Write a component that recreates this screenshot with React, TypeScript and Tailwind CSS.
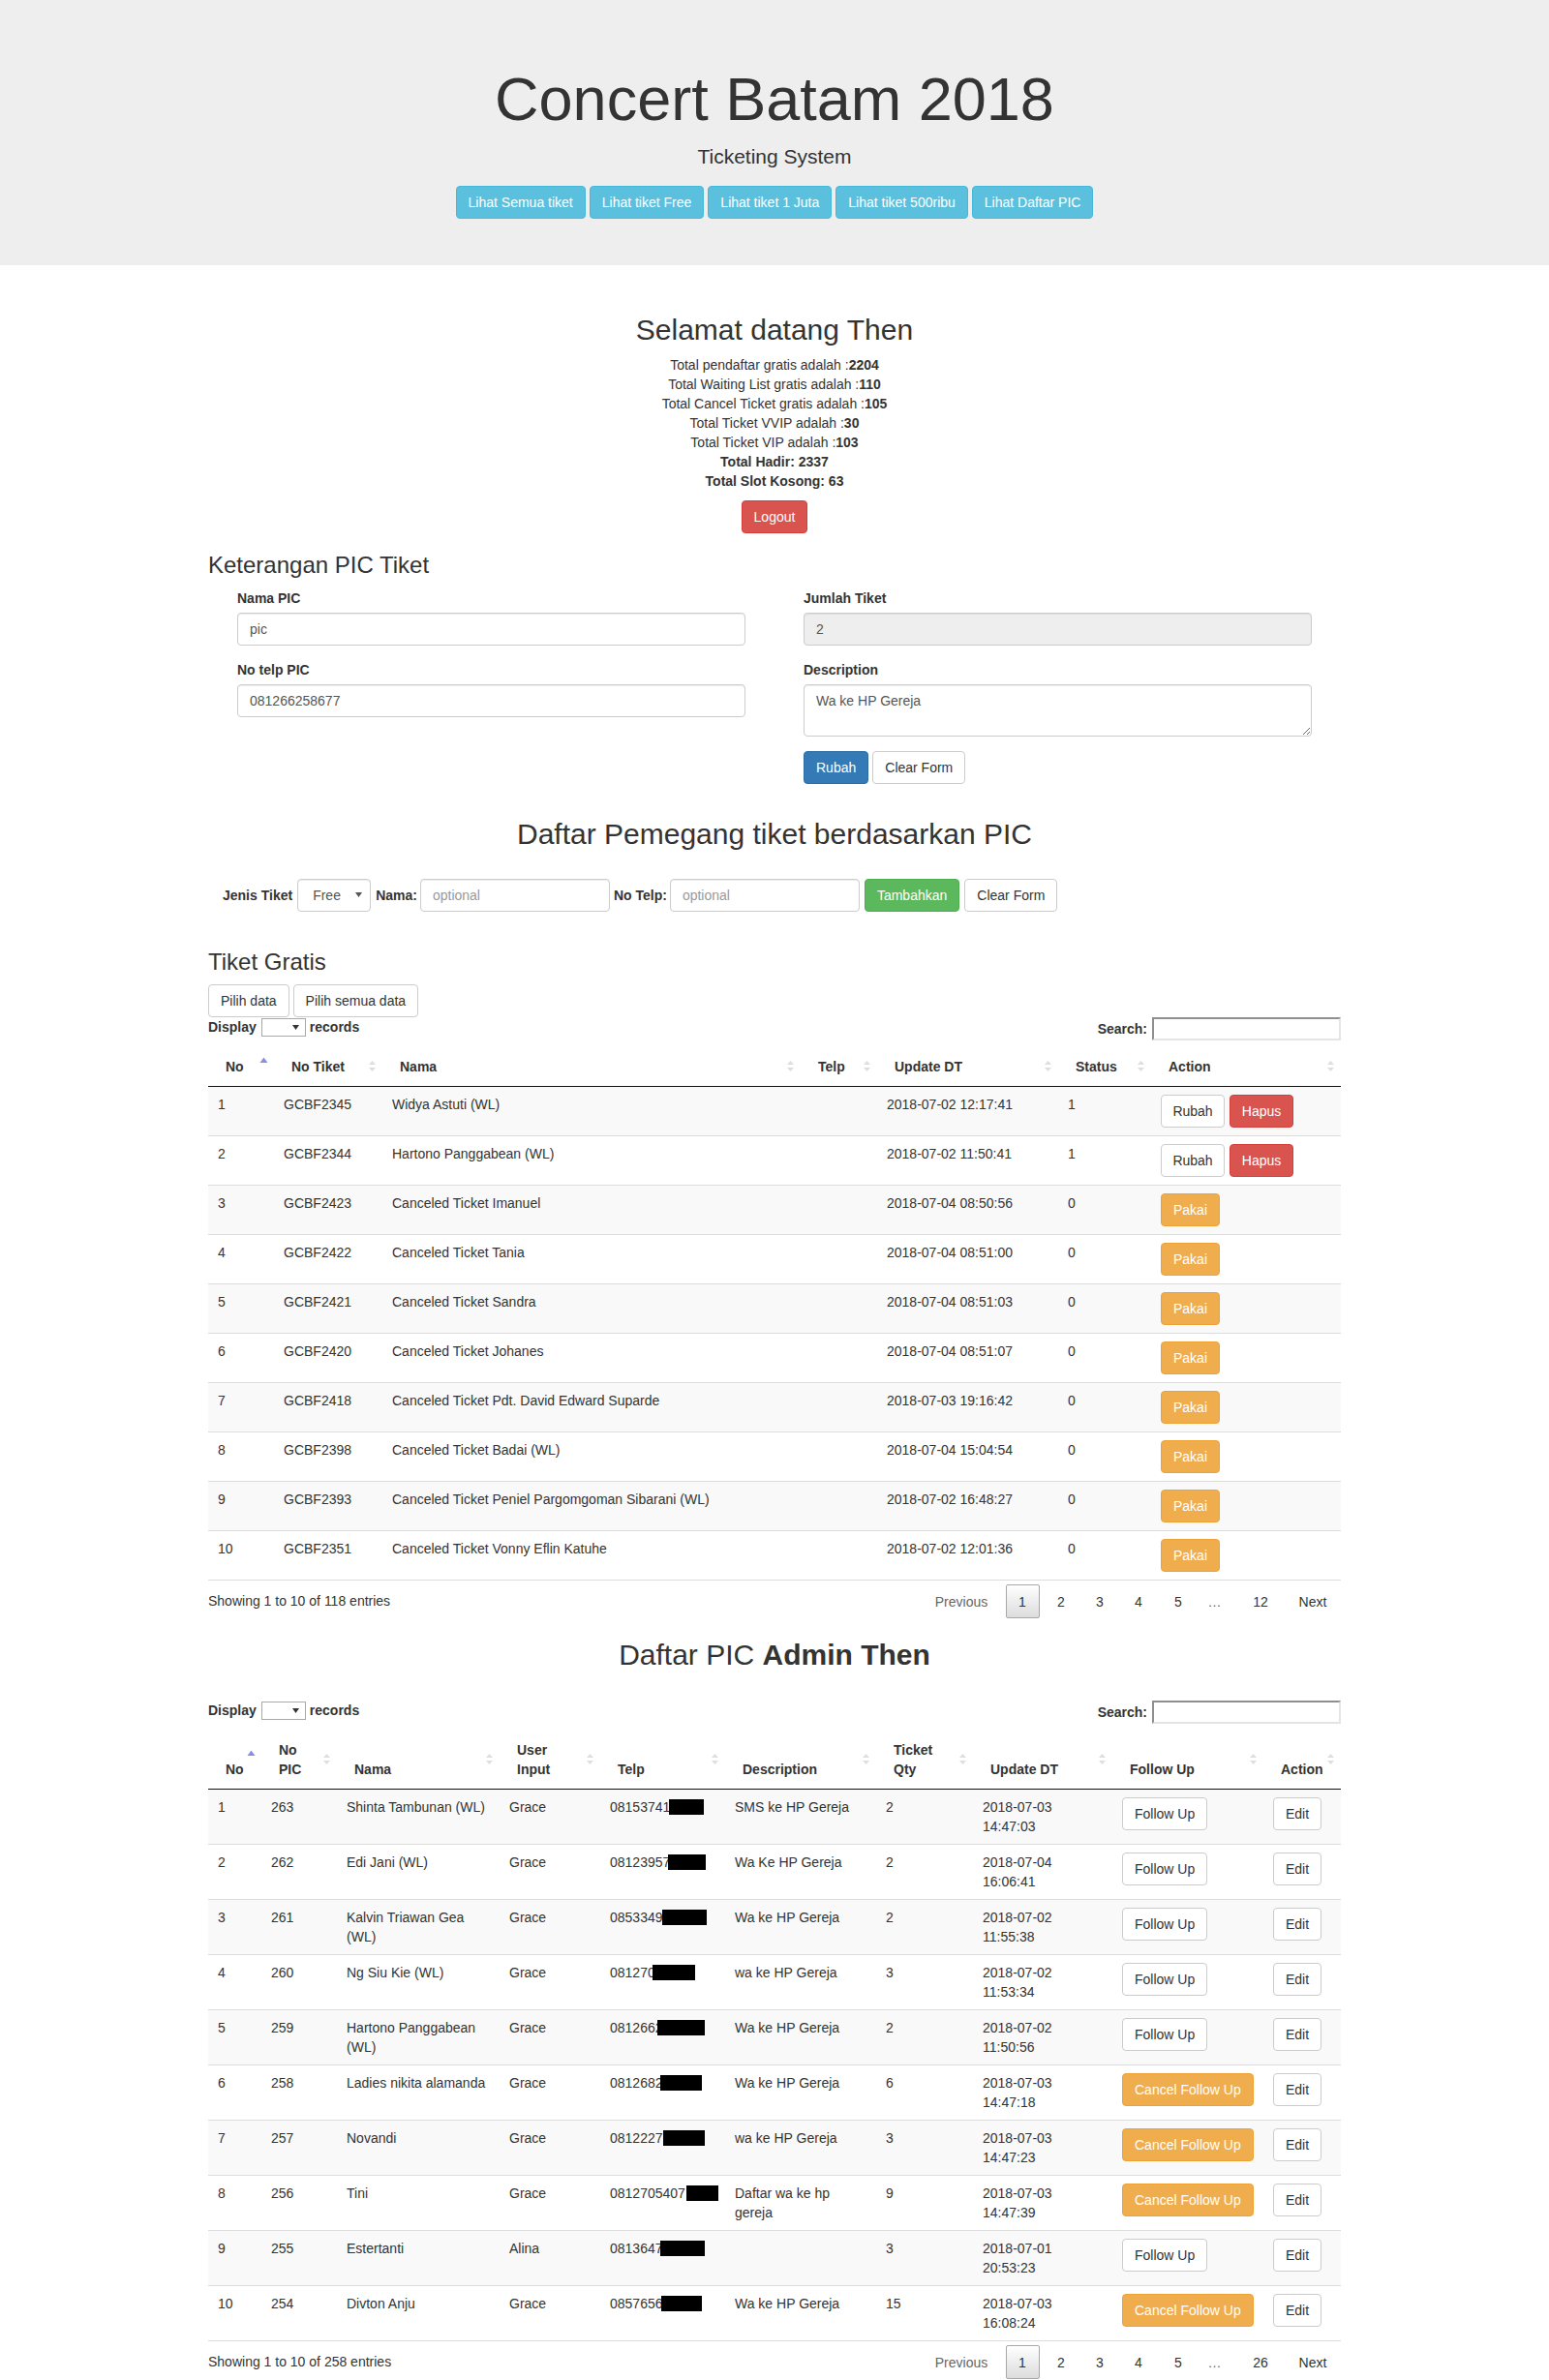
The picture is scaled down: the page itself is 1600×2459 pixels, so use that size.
import React from 'react'

const btn =
  'inline-flex h-[34px] items-center justify-center whitespace-nowrap rounded-[4px] border px-[12px] text-[14px] leading-[20px]'
const btnDefault = `${btn} border-[#ccc] bg-white text-[#333]`
const btnInfo = `${btn} border-[#46b8da] bg-[#5bc0de] text-white`
const btnDanger = `${btn} border-[#d43f3a] bg-[#d9534f] text-white`
const btnPrimary = `${btn} border-[#2e6da4] bg-[#337ab7] text-white`
const btnSuccess = `${btn} border-[#4cae4c] bg-[#5cb85c] text-white`
const btnWarning = `${btn} border-[#eea236] bg-[#f0ad4e] text-white`

// bg is set per use (white / disabled grey)
const formControl =
  'block h-[34px] w-full rounded-[4px] border border-[#ccc] px-[12px] py-[6px] text-[14px] leading-[20px] text-[#555] shadow-[inset_0_1px_1px_rgba(0,0,0,0.075)] outline-none placeholder:text-[#999]'

const gratis = [
  ['1', 'GCBF2345', 'Widya Astuti (WL)', '2018-07-02 12:17:41', '1'],
  ['2', 'GCBF2344', 'Hartono Panggabean (WL)', '2018-07-02 11:50:41', '1'],
  ['3', 'GCBF2423', 'Canceled Ticket Imanuel', '2018-07-04 08:50:56', '0'],
  ['4', 'GCBF2422', 'Canceled Ticket Tania', '2018-07-04 08:51:00', '0'],
  ['5', 'GCBF2421', 'Canceled Ticket Sandra', '2018-07-04 08:51:03', '0'],
  ['6', 'GCBF2420', 'Canceled Ticket Johanes', '2018-07-04 08:51:07', '0'],
  ['7', 'GCBF2418', 'Canceled Ticket Pdt. David Edward Suparde', '2018-07-03 19:16:42', '0'],
  ['8', 'GCBF2398', 'Canceled Ticket Badai (WL)', '2018-07-04 15:04:54', '0'],
  ['9', 'GCBF2393', 'Canceled Ticket Peniel Pargomgoman Sibarani (WL)', '2018-07-02 16:48:27', '0'],
  ['10', 'GCBF2351', 'Canceled Ticket Vonny Eflin Katuhe', '2018-07-02 12:01:36', '0'],
]

type Pic = {
  no: string
  pic: string
  nama: string
  user: string
  telp: string
  box: [number, number]
  desc: string
  qty: string
  dt: string
  cancel?: boolean
}

const pics: Pic[] = [
  { no: '1', pic: '263', nama: 'Shinta Tambunan (WL)', user: 'Grace', telp: '08153741', box: [61, 36], desc: 'SMS ke HP Gereja', qty: '2', dt: '2018-07-03 14:47:03' },
  { no: '2', pic: '262', nama: 'Edi Jani (WL)', user: 'Grace', telp: '08123957', box: [60, 39], desc: 'Wa Ke HP Gereja', qty: '2', dt: '2018-07-04 16:06:41' },
  { no: '3', pic: '261', nama: 'Kalvin Triawan Gea (WL)', user: 'Grace', telp: '0853349', box: [54, 46], desc: 'Wa ke HP Gereja', qty: '2', dt: '2018-07-02 11:55:38' },
  { no: '4', pic: '260', nama: 'Ng Siu Kie (WL)', user: 'Grace', telp: '081270', box: [44, 44], desc: 'wa ke HP Gereja', qty: '3', dt: '2018-07-02 11:53:34' },
  { no: '5', pic: '259', nama: 'Hartono Panggabean (WL)', user: 'Grace', telp: '0812662', box: [49, 49], desc: 'Wa ke HP Gereja', qty: '2', dt: '2018-07-02 11:50:56' },
  { no: '6', pic: '258', nama: 'Ladies nikita alamanda', user: 'Grace', telp: '0812682', box: [52, 43], desc: 'Wa ke HP Gereja', qty: '6', dt: '2018-07-03 14:47:18', cancel: true },
  { no: '7', pic: '257', nama: 'Novandi', user: 'Grace', telp: '0812227', box: [55, 43], desc: 'wa ke HP Gereja', qty: '3', dt: '2018-07-03 14:47:23', cancel: true },
  { no: '8', pic: '256', nama: 'Tini', user: 'Grace', telp: '0812705407', box: [79, 33], desc: 'Daftar wa ke hp gereja', qty: '9', dt: '2018-07-03 14:47:39', cancel: true },
  { no: '9', pic: '255', nama: 'Estertanti', user: 'Alina', telp: '0813647', box: [52, 46], desc: '', qty: '3', dt: '2018-07-01 20:53:23' },
  { no: '10', pic: '254', nama: 'Divton Anju', user: 'Grace', telp: '0857656', box: [53, 42], desc: 'Wa ke HP Gereja', qty: '15', dt: '2018-07-03 16:08:24', cancel: true },
]

function SortIcon({ asc }: { asc?: boolean }) {
  return (
    <svg
      className="absolute right-[6px] top-1/2 -translate-y-1/2"
      width="9"
      height="19"
      viewBox="0 0 9 19"
    >
      {asc ? (
        <path d="M4.5 0 L8.5 5.5 L0.5 5.5 Z" fill="#8b8be8" />
      ) : (
        <>
          <path d="M4.5 3.5 L8 7.5 L1 7.5 Z" fill="#dedede" />
          <path d="M4.5 14.5 L8 10.5 L1 10.5 Z" fill="#dedede" />
        </>
      )}
    </svg>
  )
}

function Th({ children, asc }: { children: React.ReactNode; asc?: boolean }) {
  return (
    <th className="relative border-b border-[#111] px-[18px] py-[10px] text-left align-bottom font-bold leading-[20px]">
      {children}
      <SortIcon asc={asc} />
    </th>
  )
}

function TableTools() {
  return (
    <div className="flex items-start justify-between">
      <div className="flex h-[20px] items-center font-bold">
        <span>Display</span>
        <span className="ml-[5px] flex h-[19px] w-[46px] items-center justify-end border border-[#a9a9a9] bg-white pr-[6px]">
          <svg width="7" height="5" viewBox="0 0 7 5">
            <path d="M0 0 L7 0 L3.5 5 Z" fill="#333" />
          </svg>
        </span>
        <span className="ml-[4px]">records</span>
      </div>
      <div className="flex items-center font-bold">
        <span>Search:</span>
        <input className="ml-[5px] h-[24px] w-[195px] border-2 border-t-[#8f8f8f] border-l-[#8f8f8f] border-r-[#e4e4e4] border-b-[#e4e4e4] bg-white outline-none" />
      </div>
    </div>
  )
}

function Pager({ last, total }: { last: string; total: string }) {
  const num = 'flex h-[35px] w-[35px] items-center justify-center'
  return (
    <div className="flex items-start justify-between">
      <div className="pt-[11px]">Showing 1 to 10 of {total} entries</div>
      <div className="flex items-center pt-[4px] pb-[1px] pr-[1.5px]">
        <span className="w-[82px] text-center text-[#666]">Previous</span>
        <span className="ml-[4.5px] flex h-[35px] w-[35px] items-center justify-center rounded-[2px] border border-[#a8a8a8] bg-linear-to-b from-white to-[#dcdcdc]">
          1
        </span>
        <span className={`ml-[5px] ${num}`}>2</span>
        <span className={`ml-[5px] ${num}`}>3</span>
        <span className={`ml-[5px] ${num}`}>4</span>
        <span className={`ml-[6px] ${num}`}>5</span>
        <span className={`ml-[2.5px] ${num} text-[#666]`}>…</span>
        <span className={`ml-[12.5px] ${num}`}>{last}</span>
        <span className="ml-[9px] w-[55px] text-center">Next</span>
      </div>
    </div>
  )
}

function GratisTable() {
  return (
    <table className="mt-[7px] w-full table-fixed border-collapse">
      <colgroup>
        <col className="w-[68px]" />
        <col className="w-[112px]" />
        <col className="w-[432px]" />
        <col className="w-[79px]" />
        <col className="w-[187px]" />
        <col className="w-[96px]" />
        <col className="w-[196px]" />
      </colgroup>
      <thead>
        <tr>
          <Th asc>No</Th>
          <Th>No Tiket</Th>
          <Th>Nama</Th>
          <Th>Telp</Th>
          <Th>Update DT</Th>
          <Th>Status</Th>
          <Th>Action</Th>
        </tr>
      </thead>
      <tbody>
        {gratis.map((r, i) => {
          const td = `px-[10px] py-[8px] align-top leading-[20px] ${i === gratis.length - 1 ? 'border-b border-[#111]' : ''} ${i > 0 ? 'border-t border-[#ddd]' : ''}`
          return (
            <tr key={r[0]} className={i % 2 === 0 ? 'bg-[#f9f9f9]' : 'bg-white'}>
              <td className={td}>{r[0]}</td>
              <td className={td}>{r[1]}</td>
              <td className={td}>{r[2]}</td>
              <td className={td}></td>
              <td className={td}>{r[3]}</td>
              <td className={td}>{r[4]}</td>
              <td className={td}>
                {r[4] === '1' ? (
                  <div className="flex gap-[5px]">
                    <span className={`${btnDefault} w-[66px]`}>Rubah</span>
                    <span className={`${btnDanger} w-[66px]`}>Hapus</span>
                  </div>
                ) : (
                  <div className="flex">
                    <span className={`${btnWarning} w-[61px]`}>Pakai</span>
                  </div>
                )}
              </td>
            </tr>
          )
        })}
      </tbody>
    </table>
  )
}

function PicTable() {
  return (
    <table className="mt-[7px] w-full table-fixed border-collapse">
      <colgroup>
        <col className="w-[55px]" />
        <col className="w-[78px]" />
        <col className="w-[168px]" />
        <col className="w-[104px]" />
        <col className="w-[129px]" />
        <col className="w-[156px]" />
        <col className="w-[100px]" />
        <col className="w-[144px]" />
        <col className="w-[156px]" />
        <col className="w-[80px]" />
      </colgroup>
      <thead>
        <tr>
          <Th asc>No</Th>
          <Th>
            No
            <br />
            PIC
          </Th>
          <Th>Nama</Th>
          <Th>
            User
            <br />
            Input
          </Th>
          <Th>Telp</Th>
          <Th>Description</Th>
          <Th>
            Ticket
            <br />
            Qty
          </Th>
          <Th>Update DT</Th>
          <Th>Follow Up</Th>
          <Th>Action</Th>
        </tr>
      </thead>
      <tbody>
        {pics.map((r, i) => {
          const td = `px-[10px] py-[8px] align-top leading-[20px] ${i === pics.length - 1 ? 'border-b border-[#111]' : ''} ${i > 0 ? 'border-t border-[#ddd]' : ''}`
          return (
            <tr key={r.no} className={i % 2 === 0 ? 'bg-[#f9f9f9]' : 'bg-white'}>
              <td className={td}>{r.no}</td>
              <td className={td}>{r.pic}</td>
              <td className={td}>{r.nama}</td>
              <td className={td}>{r.user}</td>
              <td className={td}>
                <div className="relative">
                  <span>{r.telp}</span>
                  <span
                    className="absolute top-[2px] h-[16px] bg-black"
                    style={{ left: r.box[0], width: r.box[1] }}
                  />
                </div>
              </td>
              <td className={td}>{r.desc}</td>
              <td className={td}>{r.qty}</td>
              <td className={td}>{r.dt}</td>
              <td className={td}>
                <div className="flex">
                  {r.cancel ? (
                    <span className={btnWarning}>Cancel Follow Up</span>
                  ) : (
                    <span className={btnDefault}>Follow Up</span>
                  )}
                </div>
              </td>
              <td className={td}>
                <div className="flex">
                  <span className={btnDefault}>Edit</span>
                </div>
              </td>
            </tr>
          )
        })}
      </tbody>
    </table>
  )
}

export default function App() {
  return (
    <div className="min-h-screen bg-white font-['Liberation_Sans',Arial,Helvetica,sans-serif] text-[14px] leading-[20px] text-[#333]">
      <div className="mb-[30px] bg-[#eee] py-[48px]">
        <div className="mx-auto flex w-[1170px] flex-col items-center">
          <h1 className="mt-[20px] mb-[10px] text-[63px] leading-[69.3px]">Concert Batam 2018</h1>
          <p className="mb-[15px] text-[21px] leading-[30px]">Ticketing System</p>
          <div className="flex gap-[4px]">
            <span className={btnInfo}>Lihat Semua tiket</span>
            <span className={btnInfo}>Lihat tiket Free</span>
            <span className={btnInfo}>Lihat tiket 1 Juta</span>
            <span className={btnInfo}>Lihat tiket 500ribu</span>
            <span className={btnInfo}>Lihat Daftar PIC</span>
          </div>
        </div>
      </div>

      <div className="mx-auto flex w-[1170px] flex-col">
        <h2 className="mt-[20px] mb-[10px] text-center text-[30px] leading-[33px]">Selamat datang Then</h2>
        <div className="text-center">
          <div>
            Total pendaftar gratis adalah :<b>2204</b>
          </div>
          <div>
            Total Waiting List gratis adalah :<b>110</b>
          </div>
          <div>
            Total Cancel Ticket gratis adalah :<b>105</b>
          </div>
          <div>
            Total Ticket VVIP adalah :<b>30</b>
          </div>
          <div>
            Total Ticket VIP adalah :<b>103</b>
          </div>
          <div className="font-bold">Total Hadir: 2337</div>
          <div className="font-bold">Total Slot Kosong: 63</div>
        </div>
        <div className="mt-[10px] flex justify-center">
          <span className={btnDanger}>Logout</span>
        </div>

        <h3 className="mt-[20px] mb-[10px] text-[24px] leading-[26.4px]">Keterangan PIC Tiket</h3>
        <div className="grid grid-cols-2">
          <div className="px-[30px]">
            <label className="mb-[5px] block font-bold">Nama PIC</label>
            <input className={`${formControl} bg-white`} defaultValue="pic" />
            <label className="mt-[15px] mb-[5px] block font-bold">No telp PIC</label>
            <input className={`${formControl} bg-white`} defaultValue="081266258677" />
          </div>
          <div className="px-[30px]">
            <label className="mb-[5px] block font-bold">Jumlah Tiket</label>
            <input className={`${formControl} bg-[#eee]`} defaultValue="2" disabled />
            <label className="mt-[15px] mb-[5px] block font-bold">Description</label>
            <textarea
              className="block h-[54px] w-full resize-y rounded-[4px] border border-[#ccc] bg-white px-[12px] py-[6px] text-[14px] leading-[20px] text-[#555] shadow-[inset_0_1px_1px_rgba(0,0,0,0.075)] outline-none"
              defaultValue="Wa ke HP Gereja"
            />
            <div className="mt-[15px] mb-[15px] flex gap-[4px]">
              <span className={btnPrimary}>Rubah</span>
              <span className={btnDefault}>Clear Form</span>
            </div>
          </div>
        </div>

        <h2 className="mt-[20px] mb-[10px] text-center text-[30px] leading-[33px]">
          Daftar Pemegang tiket berdasarkan PIC
        </h2>
        <div className="mt-[20px] flex h-[34px] items-center pl-[15px]">
          <b>Jenis Tiket</b>
          <div className="ml-[5px] flex h-[34px] w-[76px] items-center justify-between rounded-[4px] border border-[#ccc] bg-white pl-[15px] pr-[8px] text-[#555] shadow-[inset_0_1px_1px_rgba(0,0,0,0.075)]">
            <span>Free</span>
            <svg width="7" height="5" viewBox="0 0 7 5">
              <path d="M0 0 L7 0 L3.5 5 Z" fill="#555" />
            </svg>
          </div>
          <b className="ml-[5px]">Nama:</b>
          <input className={`${formControl} ml-[3px] !w-[196px] bg-white`} placeholder="optional" />
          <b className="ml-[4px]">No Telp:</b>
          <input className={`${formControl} ml-[3px] !w-[196px] bg-white`} placeholder="optional" />
          <span className={`${btnSuccess} ml-[5px]`}>Tambahkan</span>
          <span className={`${btnDefault} ml-[5px]`}>Clear Form</span>
        </div>

        <h3 className="mt-[39px] mb-[10px] text-[24px] leading-[26.4px]">Tiket Gratis</h3>
        <div className="flex gap-[4px]">
          <span className={btnDefault}>Pilih data</span>
          <span className={btnDefault}>Pilih semua data</span>
        </div>
        <TableTools />
        <GratisTable />
        <Pager last="12" total="118" />

        <h2 className="mt-[20px] mb-[10px] text-center text-[30px] leading-[33px]">
          Daftar PIC <b>Admin Then</b>
        </h2>
        <div className="mt-[21px]">
          <TableTools />
        </div>
        <PicTable />
        <Pager last="26" total="258" />
      </div>
    </div>
  )
}
